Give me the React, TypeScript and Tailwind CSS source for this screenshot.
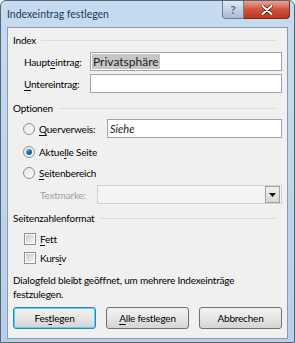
import React from "react";

const font = { fontFamily: 'Lato, "Noto Sans", sans-serif' };

const U = ({ children }: { children: React.ReactNode }) => (
  <span className="underline underline-offset-2">{children}</span>
);

const GroupHeader = ({ label, className = "" }: { label: string; className?: string }) => (
  <div className={`flex h-4 items-center gap-[5px] pr-[6px] ${className}`}>
    <span>{label}</span>
    <div className="h-px flex-1 bg-[#dcdcdc]" />
  </div>
);

const Radio = ({ checked = false }: { checked?: boolean }) => (
  <div className="flex h-[12px] w-[12px] items-center justify-center rounded-full border border-[#8f8f8f] bg-gradient-to-br from-[#e6e6e6] to-[#fbfbfb]">
    {checked && (
      <div className="h-[6px] w-[6px] rounded-full bg-gradient-to-br from-[#6fc3f4] via-[#1b72b8] to-[#0d3e7a]" />
    )}
  </div>
);

const Checkbox = () => (
  <div className="flex h-[12px] w-[12px] items-center justify-center border border-[#8f8f8f] bg-white">
    <div className="h-[8px] w-[8px] bg-gradient-to-br from-[#cbcbcb] to-[#f6f6f6]" />
  </div>
);

const Button = ({ children, primary = false }: { children: React.ReactNode; primary?: boolean }) => (
  <div
    className={`flex h-[22px] w-[83px] items-center justify-center rounded-[3px] border ${
      primary ? "border-[#3c7fb1] shadow-[inset_0_0_0_1px_#48d8fb]" : "border-[#707070]"
    } bg-gradient-to-b from-[#f2f2f2] via-[#e6e6e6] to-[#d4d4d4]`}
  >
    {children}
  </div>
);

export default function App() {
  return (
    <div
      className="flex h-[343px] w-[295px] flex-col overflow-hidden rounded-t-[6px] border border-[#56657a] bg-gradient-to-b from-[#c6dbf0] to-[#b7cfe8] text-[10px] leading-[14px] tracking-[-0.2px] text-black"
      style={font}
    >
      {/* title bar */}
      <div className="flex h-[26px] shrink-0 items-start justify-between">
        <div className="pl-[6px] pt-[6px] text-[10.5px] tracking-normal text-[#1e3a5c]">Indexeintrag festlegen</div>
        <div className="flex pr-[4px]">
          <div className="flex h-[18px] w-[22px] items-center justify-center rounded-bl-[4px] border border-t-0 border-[#6b7d92] bg-gradient-to-b from-[#dfe9f4] via-[#c4d3e3] to-[#a9bbd0] text-[12px] font-bold text-[#5a6c82]">
            ?
          </div>
          <div className="flex h-[18px] w-[46px] items-center justify-center rounded-br-[4px] border border-l-0 border-t-0 border-[#6b2d24] bg-gradient-to-b from-[#e9a293] via-[#d2523c] to-[#c0341d]">
            <svg width="12" height="10" viewBox="0 0 12 10">
              <path d="M1.5 1 L10.5 9 M10.5 1 L1.5 9" stroke="#5b1d14" strokeWidth="3.6" strokeLinecap="round" />
              <path d="M1.5 1 L10.5 9 M10.5 1 L1.5 9" stroke="#ffffff" strokeWidth="2" strokeLinecap="round" />
            </svg>
          </div>
        </div>
      </div>

      {/* client area */}
      <div className="mx-[6px] mb-[3px] flex flex-1 flex-col border border-[#8a9bb0] bg-[#f0f0f0] pl-[5px] pr-[5px] pt-[4px]">
        <GroupHeader label="Index" />

        <div className="mt-[4px] flex h-[19px] items-center pl-[11px]">
          <span className="w-[66px]">
            Haupt<U>e</U>intrag:
          </span>
          <div className="flex h-[19px] flex-1 items-center border border-[#9fa3aa] bg-white px-[1px]">
            <span className="bg-[#c6c6c6] px-[1px] text-[12px] leading-[15px] tracking-normal text-[#222]">Privatsphäre</span>
          </div>
        </div>

        <div className="mt-[3px] flex h-[19px] items-center pl-[11px]">
          <span className="w-[66px]">
            <U>U</U>ntereintrag:
          </span>
          <div className="h-[19px] flex-1 border border-[#9fa3aa] bg-white" />
        </div>

        <GroupHeader label="Optionen" className="mt-[7px]" />

        <div className="mt-[3px] flex h-[19px] items-center pl-[10px]">
          <Radio />
          <span className="ml-[4px] w-[68px]">
            <U>Q</U>uerverweis:
          </span>
          <div className="flex h-[19px] flex-1 items-center border border-[#9fa3aa] bg-white pl-[2px]">
            <span className="text-[11px] italic tracking-normal text-[#222]">Siehe</span>
          </div>
        </div>

        <div className="mt-[6px] flex h-4 items-center pl-[10px]">
          <Radio checked />
          <span className="ml-[4px]">
            Aktue<U>l</U>le Seite
          </span>
        </div>

        <div className="mt-[5px] flex h-4 items-center pl-[10px]">
          <Radio />
          <span className="ml-[4px]">
            <U>S</U>eitenbereich
          </span>
        </div>

        <div className="mt-[4px] flex h-[19px] items-center pl-[27px]">
          <span className="w-[57px] text-[#a0a0a0]">Textmarke:</span>
          <div className="flex h-[19px] flex-1 items-center justify-end border border-[#cfd1d5] bg-[#f4f4f4] pr-[1px]">
            <div className="flex h-[17px] w-[15px] items-center justify-center border border-[#a3a3a3] bg-gradient-to-b from-[#f0f0f0] to-[#d8d8d8]">
              <svg width="7" height="4" viewBox="0 0 7 4">
                <path d="M0 0 H7 L3.5 4 Z" fill="#111" />
              </svg>
            </div>
          </div>
        </div>

        <GroupHeader label="Seitenzahlenformat" className="mt-[6px]" />

        <div className="mt-[5px] flex h-4 items-center pl-[11px]">
          <Checkbox />
          <span className="ml-[4px]">
            <U>F</U>ett
          </span>
        </div>

        <div className="mt-[3px] flex h-4 items-center pl-[11px]">
          <Checkbox />
          <span className="ml-[4px]">
            Kurs<U>i</U>v
          </span>
        </div>

        <div className="mt-[7px] leading-[14px]">
          Dialogfeld bleibt geöffnet, um mehrere Indexeinträge
          <br />
          festzulegen.
        </div>

        <div className="mt-[6px] flex gap-[10px]">
          <Button primary>
            Fes<U>t</U>legen
          </Button>
          <Button>
            <U>A</U>lle festlegen
          </Button>
          <Button>Abbrechen</Button>
        </div>
      </div>
    </div>
  );
}
